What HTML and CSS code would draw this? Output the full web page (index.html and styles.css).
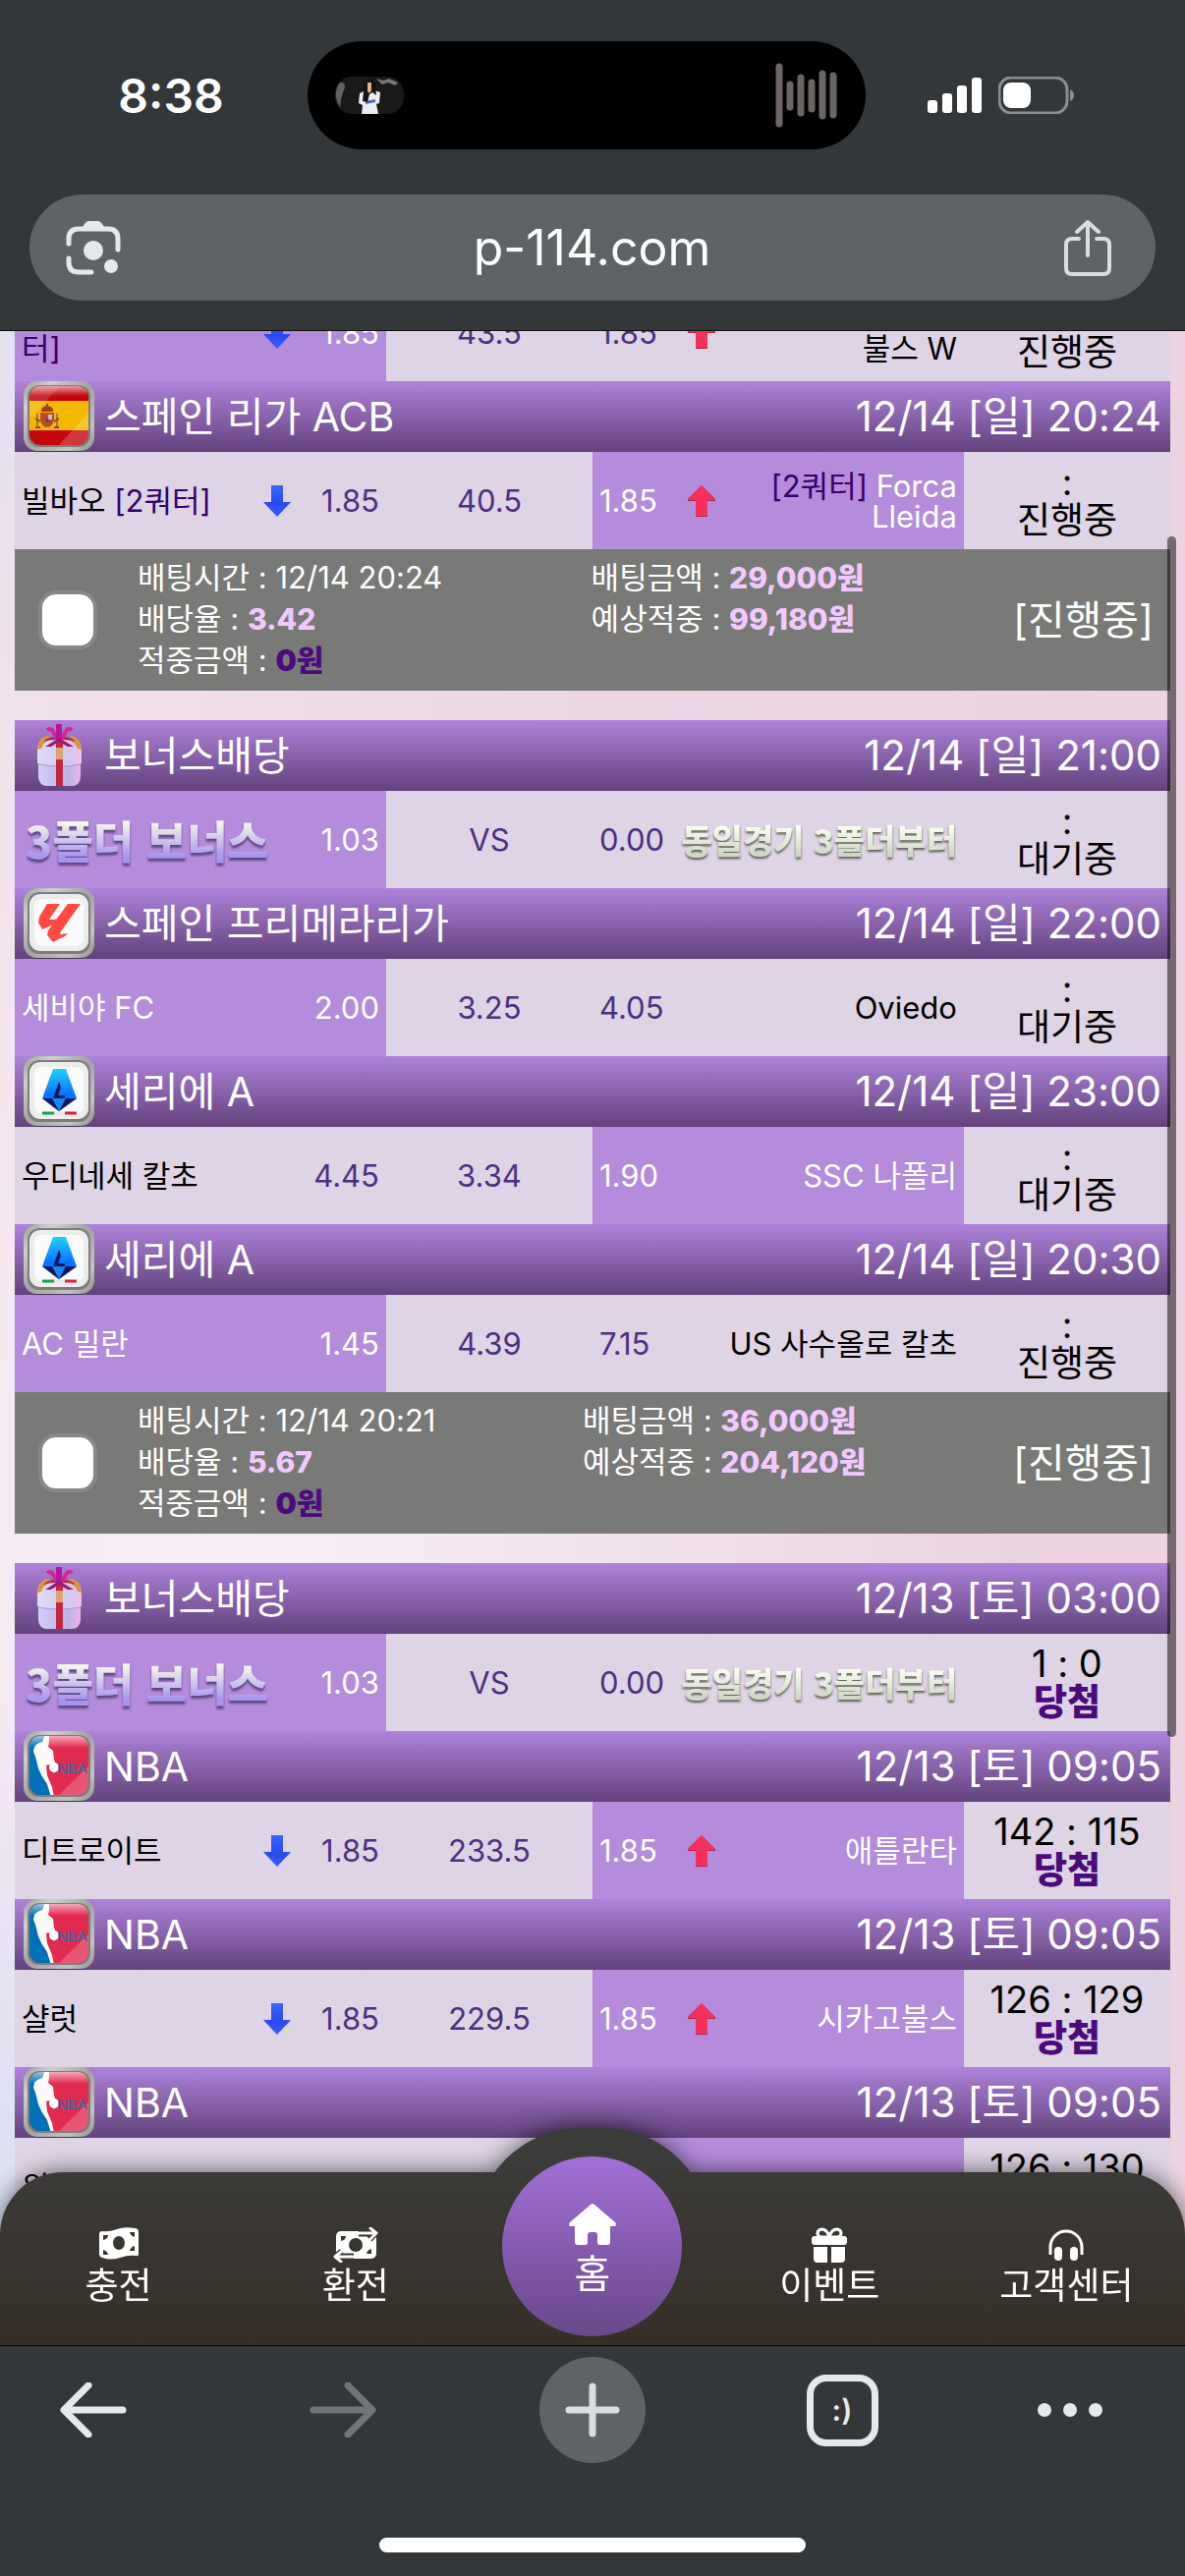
FILE: index.html
```html
<!DOCTYPE html>
<html lang="ko">
<head>
<meta charset="utf-8">
<meta name="viewport" content="width=device-width, initial-scale=1">
<title>p-114.com</title>
<link rel="stylesheet" href="styles.css">
</head>
<body>

<svg class="sprite" aria-hidden="true">
  <defs>
    <linearGradient id="metal" x1="0" y1="0" x2="1" y2="1">
      <stop offset="0" stop-color="#9b9b9a"/><stop offset=".2" stop-color="#cfcfcd"/><stop offset=".5" stop-color="#a2a2a0"/><stop offset=".8" stop-color="#c2c2c0"/><stop offset="1" stop-color="#8d8d8b"/>
    </linearGradient>
    <linearGradient id="gloss" x1="0" y1="0" x2="0" y2="1">
      <stop offset="0" stop-color="#fff" stop-opacity=".6"/><stop offset="1" stop-color="#fff" stop-opacity="0"/>
    </linearGradient>
    <linearGradient id="serie" x1="0" y1="0" x2="0" y2="1">
      <stop offset="0" stop-color="#22d0fb"/><stop offset=".6" stop-color="#0a74ff"/><stop offset="1" stop-color="#0a66f5"/>
    </linearGradient>
    <linearGradient id="box" x1="0" y1="0" x2="1" y2="0">
      <stop offset="0" stop-color="#d5cff5"/><stop offset=".7" stop-color="#b9b2ea"/><stop offset="1" stop-color="#efb4e4"/>
    </linearGradient>
    <linearGradient id="lid" x1="0" y1="0" x2="1" y2="0">
      <stop offset="0" stop-color="#dedcf6"/><stop offset=".7" stop-color="#cfcaf0"/><stop offset="1" stop-color="#f2bfe6"/>
    </linearGradient>
    <linearGradient id="down" x1="0" y1="0" x2="0" y2="1">
      <stop offset="0" stop-color="#3d63ff"/><stop offset=".6" stop-color="#2a4af0"/><stop offset="1" stop-color="#3a5cff"/>
    </linearGradient>
    <clipPath id="face"><rect x="6" y="7" width="60" height="60" rx="11"/></clipPath>
  </defs>
  <symbol id="frame" viewBox="0 0 72 76">
    <rect x="2" y="4" width="68" height="70" rx="14" fill="#000" opacity=".3"/>
    <rect x="0" y="2" width="72" height="71" rx="14" fill="url(#metal)"/>
    <rect x="4" y="6" width="64" height="63" rx="12" fill="#7d7d7d"/>
  </symbol>
  <symbol id="spain" viewBox="0 0 72 76">
    <use href="#frame"/>
    <g clip-path="url(#face)">
      <rect x="6" y="7" width="60" height="60" fill="#c6060f"/>
      <rect x="6" y="22" width="60" height="30" fill="#f3b800"/>
      <path d="M17 34h14v7q-1 7-7 8q-6-1-7-8z" fill="#b8501c"/>
      <path d="M20 36h5v5h-5z" fill="#d83b2c"/><path d="M25 36h4v5h-4z" fill="#d9b7c9"/>
      <circle cx="24" cy="42" r="2" fill="#3a4f96"/>
      <path d="M18 33q-1-5 6-6q7 1 6 6z" fill="#a33a18"/><path d="M24 25v3" stroke="#7d5a10" stroke-width="2"/>
      <path d="M14 35v13M34 35v13" stroke="#8a7f70" stroke-width="2"/>
      <path d="M12 40l5 3M31 43l5-3M12 49h5M31 49h5" stroke="#b33420" stroke-width="2"/>
      <rect x="6" y="7" width="60" height="10" fill="url(#gloss)"/>
      <path d="M6 7h31L6 40z" fill="#fff" opacity=".14"/><path d="M66 34v33H36z" fill="#fff" opacity=".2"/>
    </g>
  </symbol>
  <symbol id="white" viewBox="0 0 72 76">
    <use href="#frame"/>
    <rect x="6" y="8" width="60" height="58" rx="11" fill="#ececeb"/>
    <rect x="11" y="13" width="50" height="48" rx="8" fill="#fbfbfb"/>
  </symbol>
  <symbol id="laliga" viewBox="0 0 72 76">
    <use href="#white"/>
    <path d="M24 18h13L26 34h4l5-1q-3 6-9 8l-7 3-4-7 1-6zM45 18h13L38 46l-1 3 8-1q-3 4-8 5l-7 4-6-7 1-5z" fill="#ff4b44"/>
  </symbol>
  <symbol id="seriea" viewBox="0 0 72 76">
    <use href="#white"/>
    <path d="M30 15h13l11 30-18 13-17-13z" fill="url(#serie)"/>
    <path d="M19 45h35L36 58z" fill="#15155c"/><path d="M29 45h14l-7 13z" fill="#1288f0"/>
    <path d="M36 28l-6 17h12v-3h-7l3-8z" fill="#0c1a66"/>
    <path d="M19 60h12" stroke="#1ba04d" stroke-width="3"/><path d="M31 60h11" stroke="#e6e6e6" stroke-width="3"/><path d="M42 60h12" stroke="#e01d3a" stroke-width="3"/>
  </symbol>
  <symbol id="nba" viewBox="0 0 72 76">
    <use href="#frame"/>
    <g clip-path="url(#face)">
      <rect x="5" y="7" width="62" height="60" fill="#e32b52"/>
      <path d="M5 7h16l-6 18-1 10 9 20 5 12H5z" fill="#0070b8"/>
      <path d="M21 7h5v6l-1 5 5 4 1 9 3 8-3 6-5-9-3 1 1 10 5 12 2 10h-3l-4-13q-6-8-9-16l-3-12-2-5q0-8 9-10l1-2z" fill="#fafafa"/>
      <circle cx="31" cy="39" r="5" fill="#fff"/>
      <path d="M66 38v29H36z" fill="#fff" opacity=".2"/>
      <rect x="6" y="7" width="60" height="12" fill="url(#gloss)"/>
    </g>
  </symbol>
  <symbol id="gift3d" viewBox="0 0 72 76">
    <path d="M15 25h43v35q-1 9-9 9H24q-8 0-9-9z" fill="url(#box)"/>
    <path d="M14 34q0-13 10-15h25q10 2 10 15v12q-21 5-45 0z" fill="url(#lid)"/>
    <path d="M15 47q21 4 43 0" stroke="#a79bd6" stroke-width="1" fill="none"/>
    <path d="M14 32q1-12 9-14l9 2q-12 3-14 11zM59 32q-1-12-9-14l-9 2q12 3 14 11z" fill="#d8973f"/>
    <path d="M20 24q4-5 12-5l9 0q8 0 12 5-6-2-12-2h-9q-6 0-12 2z" fill="#b02a55"/>
    <path d="M33 22h7v47h-7z" fill="#c4283e"/><path d="M33 30h7v12h-7z" fill="#dfa26a"/>
    <path d="M24 12q2-2 5 0l6 10M49 12q-2-2-5 0l-6 10" stroke="#d4268f" stroke-width="4" fill="none"/>
    <path d="M33 6h6v18h-6z" fill="#b019a0"/><path d="M22 29l14-9 15 9-6 0-9-5-8 5z" fill="#a5156f"/>
  </symbol>
  <symbol id="arrow-down" viewBox="0 0 28 32"><path d="M8 0h12v17h8L14 32 0 17h8z" fill="url(#down)"/></symbol>
  <symbol id="arrow-up" viewBox="0 0 28 32"><path d="M14 0l14 14v2h-8v16H8V16H0v-2z" fill="#b92245"/><path d="M14 0l14 15h-8v16H8V15H0z" fill="#f5315b"/></symbol>
</svg>

<header class="browser-top">
  <div class="status">
    <time class="clock">8:38</time>
    <div class="island">
      <svg class="thumb" viewBox="0 0 70 38" aria-hidden="true">
        <rect width="70" height="38" rx="17" fill="#191919"/>
        <path d="M4 7q6-3 6 4Q6 20 5 31Q-3 18 4 7z" fill="#626262"/>
        <path d="M42 2l7 2 6-2 9 4-3 3-7-3-6 2z" fill="#777"/>
        <path d="M25 17l6-3h9l6 2-1 11-3 1 2 10H27l1-9-4-2z" fill="#ededf2"/>
        <path d="M31 25l10-2v3l-10 2z" fill="#506da8"/>
        <path d="M30 6q2-5 6-4q5 1 5 8l1 9-4-3-3 2-2 8-5-1z" fill="#161213"/>
        <path d="M33 6h4v8l-2 3-2-2z" fill="#e3b090"/>
      </svg>
      <svg class="wave" viewBox="0 0 64 66" aria-hidden="true">
        <g stroke="#6b6563" stroke-width="7" stroke-linecap="round"><path d="M4 4v58M15 22v23M26 15v36M37 20v27M48 11v43M59 13v40"/></g>
      </svg>
    </div>
    <div class="signals">
      <svg class="cell" viewBox="0 0 56 36" aria-hidden="true"><g fill="#fff"><rect y="23" width="10" height="13" rx="3"/><rect x="15" y="16" width="10" height="20" rx="3"/><rect x="30" y="8" width="10" height="28" rx="3"/><rect x="45" y="0" width="10" height="36" rx="3"/></g></svg>
      <svg class="battery" viewBox="0 0 78 38" aria-hidden="true"><rect x="1" y="1" width="69" height="36" rx="12" fill="none" stroke="#8b8d8f" stroke-width="3"/><rect x="5" y="6" width="28" height="26" rx="8" fill="#fff"/><path d="M73 13q4 2 4 6t-4 6z" fill="#8b8d8f"/></svg>
    </div>
  </div>
  <div class="address">
    <button class="plain" type="button" aria-label="카메라 검색">
      <svg class="ic-lens" viewBox="0 0 56 56"><g fill="none" stroke="#e6e9ec" stroke-width="5" stroke-linecap="round"><path d="M3 24v-5Q3 9 13 9h30q10 0 10 10v11M3 39v4q0 10 10 10h13"/></g><path d="M16 9q4-8 7-8h10q3 0 7 8z" fill="#e6e9ec"/><circle cx="28" cy="31" r="10" fill="#e6e9ec"/><circle cx="46" cy="47" r="7" fill="#e6e9ec"/></svg>
    </button>
    <span class="url">p-114.com</span>
    <button class="plain" type="button" aria-label="공유">
      <svg class="ic-share" viewBox="0 0 50 58"><g fill="none" stroke="#dadde2" stroke-width="4" stroke-linecap="round" stroke-linejoin="round"><path d="M16 20h-7q-6 0-6 6v24q0 6 6 6h32q6 0 6-6V26q0-6-6-6h-7"/><path d="M25 37V4M14 13L25 3l11 10"/></g></svg>
    </button>
  </div>
</header>

<main class="screen">
  <div class="scroll">

    <table class="bet">
      <colgroup><col class="c-team"><col class="c-line"><col class="c-team"><col class="c-state"></colgroup>
      <tbody>
      <tr class="match">
        <td class="on"><div class="side"><span class="team"><br><em>터]</em></span><svg class="arw"><use href="#arrow-down"/></svg><span class="odd">1.85</span></div></td>
        <td class="line">43.5</td>
        <td><div class="side"><span class="odd away">1.85</span><svg class="arw"><use href="#arrow-up"/></svg><span class="team right"><br>불스 W</span></div></td>
        <td class="state"><br>진행중</td>
      </tr>
      <tr class="league"><th colspan="4"><div class="bar"><svg class="logo"><use href="#spain"/></svg><span>스페인 리가 ACB</span><time>12/14 [일] 20:24</time></div></th></tr>
      <tr class="match">
        <td><div class="side"><span class="team">빌바오 <em>[2쿼터]</em></span><svg class="arw"><use href="#arrow-down"/></svg><span class="odd">1.85</span></div></td>
        <td class="line">40.5</td>
        <td class="on"><div class="side"><span class="odd away">1.85</span><svg class="arw"><use href="#arrow-up"/></svg><span class="team right"><em>[2쿼터]</em> Forca<br>Lleida</span></div></td>
        <td class="state">:<br>진행중</td>
      </tr>
      <tr class="total"><td colspan="4"><div class="sum">
        <input class="pick" type="checkbox" aria-label="12/14 20:24 배팅 선택">
        <p>배팅시간 : 12/14 20:24<br>배당율 : <b>3.42</b><br>적중금액 : <b class="won">0원</b></p>
        <p>배팅금액 : <b>29,000원</b><br>예상적중 : <b>99,180원</b></p>
        <span class="result">[진행중]</span>
      </div></td></tr>
      </tbody>
    </table>

    <table class="bet">
      <colgroup><col class="c-team"><col class="c-line"><col class="c-team"><col class="c-state"></colgroup>
      <tbody>
      <tr class="league"><th colspan="4"><div class="bar"><svg class="logo"><use href="#gift3d"/></svg><span>보너스배당</span><time>12/14 [일] 21:00</time></div></th></tr>
      <tr class="match">
        <td class="on"><div class="side"><span class="bonus">3폴더 보너스</span><span class="odd">1.03</span></div></td>
        <td class="line">VS</td>
        <td><div class="side spread"><span class="odd away">0.00</span><span class="bonus pale">동일경기 3폴더부터</span></div></td>
        <td class="state">:<br>대기중</td>
      </tr>
      <tr class="league"><th colspan="4"><div class="bar"><svg class="logo"><use href="#laliga"/></svg><span>스페인 프리메라리가</span><time>12/14 [일] 22:00</time></div></th></tr>
      <tr class="match">
        <td class="on"><div class="side"><span class="team">세비야 FC</span><span class="odd">2.00</span></div></td>
        <td class="line">3.25</td>
        <td><div class="side"><span class="odd away">4.05</span><span class="team right">Oviedo</span></div></td>
        <td class="state">:<br>대기중</td>
      </tr>
      <tr class="league"><th colspan="4"><div class="bar"><svg class="logo"><use href="#seriea"/></svg><span>세리에 A</span><time>12/14 [일] 23:00</time></div></th></tr>
      <tr class="match">
        <td><div class="side"><span class="team">우디네세 칼초</span><span class="odd">4.45</span></div></td>
        <td class="line">3.34</td>
        <td class="on"><div class="side"><span class="odd away">1.90</span><span class="team right">SSC 나폴리</span></div></td>
        <td class="state">:<br>대기중</td>
      </tr>
      <tr class="league"><th colspan="4"><div class="bar"><svg class="logo"><use href="#seriea"/></svg><span>세리에 A</span><time>12/14 [일] 20:30</time></div></th></tr>
      <tr class="match">
        <td class="on"><div class="side"><span class="team">AC 밀란</span><span class="odd">1.45</span></div></td>
        <td class="line">4.39</td>
        <td><div class="side"><span class="odd away">7.15</span><span class="team right">US 사수올로 칼초</span></div></td>
        <td class="state">:<br>진행중</td>
      </tr>
      <tr class="total"><td colspan="4"><div class="sum">
        <input class="pick" type="checkbox" aria-label="12/14 20:21 배팅 선택">
        <p>배팅시간 : 12/14 20:21<br>배당율 : <b>5.67</b><br>적중금액 : <b class="won">0원</b></p>
        <p>배팅금액 : <b>36,000원</b><br>예상적중 : <b>204,120원</b></p>
        <span class="result">[진행중]</span>
      </div></td></tr>
      </tbody>
    </table>

    <table class="bet">
      <colgroup><col class="c-team"><col class="c-line"><col class="c-team"><col class="c-state"></colgroup>
      <tbody>
      <tr class="league"><th colspan="4"><div class="bar"><svg class="logo"><use href="#gift3d"/></svg><span>보너스배당</span><time>12/13 [토] 03:00</time></div></th></tr>
      <tr class="match">
        <td class="on"><div class="side"><span class="bonus">3폴더 보너스</span><span class="odd">1.03</span></div></td>
        <td class="line">VS</td>
        <td><div class="side spread"><span class="odd away">0.00</span><span class="bonus pale">동일경기 3폴더부터</span></div></td>
        <td class="state"><span class="score">1 : 0</span><br><b>당첨</b></td>
      </tr>
      <tr class="league"><th colspan="4"><div class="bar"><span class="logo-nba"><svg class="logo"><use href="#nba"/></svg><i>NBA</i></span><span>NBA</span><time>12/13 [토] 09:05</time></div></th></tr>
      <tr class="match">
        <td><div class="side"><span class="team">디트로이트</span><svg class="arw"><use href="#arrow-down"/></svg><span class="odd">1.85</span></div></td>
        <td class="line">233.5</td>
        <td class="on"><div class="side"><span class="odd away">1.85</span><svg class="arw"><use href="#arrow-up"/></svg><span class="team right">애틀란타</span></div></td>
        <td class="state"><span class="score">142 : 115</span><br><b>당첨</b></td>
      </tr>
      <tr class="league"><th colspan="4"><div class="bar"><span class="logo-nba"><svg class="logo"><use href="#nba"/></svg><i>NBA</i></span><span>NBA</span><time>12/13 [토] 09:05</time></div></th></tr>
      <tr class="match">
        <td><div class="side"><span class="team">샬럿</span><svg class="arw"><use href="#arrow-down"/></svg><span class="odd">1.85</span></div></td>
        <td class="line">229.5</td>
        <td class="on"><div class="side"><span class="odd away">1.85</span><svg class="arw"><use href="#arrow-up"/></svg><span class="team right">시카고불스</span></div></td>
        <td class="state"><span class="score">126 : 129</span><br><b>당첨</b></td>
      </tr>
      <tr class="league"><th colspan="4"><div class="bar"><span class="logo-nba"><svg class="logo"><use href="#nba"/></svg><i>NBA</i></span><span>NBA</span><time>12/13 [토] 09:05</time></div></th></tr>
      <tr class="match">
        <td><div class="side"><span class="team">워싱턴</span></div></td>
        <td class="line"></td>
        <td class="on"></td>
        <td class="state"><span class="score">126 : 130</span><br><b>당첨</b></td>
      </tr>
      </tbody>
    </table>
  </div>

  <div class="thumb-bar"></div>

  <nav class="dock">
    <ul>
      <li><a href="#charge"><svg class="ic" viewBox="0 0 42 36"><path d="M1 7q0-3 3-3 7 1 15-2T37 1q4 0 4 4v22q0 3-3 2-7-1-16 2T4 31q-3-1-3-4z" fill="#fff"/><ellipse cx="21" cy="16" rx="6" ry="7" fill="#38342f"/><path d="M5 8h5q0 4-5 5zM37 5v5q-4-1-5-5zM5 23q4 1 5 5H5zM37 19v5h-5q1-4 5-5z" fill="#38342f"/></svg>충전</a></li>
      <li><a href="#exchange"><svg class="ic" viewBox="0 0 46 36"><rect x="3" y="4" width="41" height="28" rx="5" fill="#fff"/><circle cx="23" cy="18" r="7" fill="#38342f"/><path d="M8 9h5q0 4-5 5zM39 22v5h-5q1-4 5-5z" fill="#38342f"/><g fill="none" stroke="#38342f" stroke-width="7" stroke-linejoin="round"><path d="M26 6h15M37 1l6 5-6 6M21 30H4M9 25l-6 5 6 5"/></g><g fill="none" stroke="#fff" stroke-width="3" stroke-linecap="round" stroke-linejoin="round"><path d="M27 6h16M38 1l6 5-6 6M20 30H3M8 25l-6 5 6 5"/></g></svg>환전</a></li>
      <li class="home"><a href="#home"><svg class="ic-home" viewBox="0 0 48 42"><path d="M22 1q2-2 4 0l21 18q2 2 0 4h-5v16q0 3-3 3h-8q-2 0-2-2V32q0-3-3-3h-4q-3 0-3 3v8q0 2-2 2H9q-3 0-3-3V23H1q-2-2 0-4z" fill="#fff"/></svg>홈</a></li>
      <li><a href="#event"><svg class="ic" viewBox="0 0 36 36"><rect y="9" width="36" height="9" rx="3" fill="#fff"/><path d="M2 20h14v16H6q-4 0-4-4zM20 20h14v12q0 4-4 4H20z" fill="#fff"/><path d="M18 10Q16 2 10 2q-4 1-4 4t3 4zM18 10q2-8 8-8q4 1 4 4t-3 4z" fill="none" stroke="#fff" stroke-width="3"/></svg>이벤트</a></li>
      <li><a href="#support"><svg class="ic" viewBox="0 0 36 36"><path d="M2 28v-8a16 16 0 0 1 32 0v8" fill="none" stroke="#fff" stroke-width="3"/><rect x="6" y="20" width="8" height="14" rx="4" fill="#fff"/><rect x="22" y="20" width="8" height="14" rx="4" fill="#fff"/></svg>고객센터</a></li>
    </ul>
  </nav>
</main>

<footer class="browser-bottom">
  <div class="tools">
    <button class="plain" type="button" aria-label="뒤로"><svg class="ic-arrow" viewBox="0 0 68 56"><path d="M64 28H5M29 3L4 28l25 25" fill="none" stroke="#e6e9ec" stroke-width="7" stroke-linecap="round" stroke-linejoin="round"/></svg></button>
    <button class="plain" type="button" aria-label="앞으로"><svg class="ic-arrow" viewBox="0 0 68 56"><path d="M4 28h59M39 3l25 25-25 25" fill="none" stroke="#737475" stroke-width="7" stroke-linecap="round" stroke-linejoin="round"/></svg></button>
    <button class="plain" type="button" aria-label="새 탭"><span class="disc"><svg class="ic-plus" viewBox="0 0 56 56"><path d="M28 4v48M4 28h48" stroke="#dadde2" stroke-width="7" stroke-linecap="round"/></svg></span></button>
    <button class="plain" type="button" aria-label="탭 목록"><span class="tabs">:)</span></button>
    <button class="plain more" type="button" aria-label="더보기"><svg class="ic-dots" viewBox="0 0 68 16"><g fill="#e6e9ec"><circle cx="8" cy="8" r="7"/><circle cx="34" cy="8" r="7"/><circle cx="60" cy="8" r="7"/></g></svg></button>
  </div>
  <div class="home-indicator"></div>
</footer>

</body>
</html>
```
FILE: styles.css
```css
* { box-sizing: border-box; }

html, body { height: 100%; margin: 0; }

body {
  display: flex;
  flex-direction: column;
  overflow: hidden;
  background: #333739;
  color: #000;
  font-family: Inter, "Noto Sans CJK KR", sans-serif;
}

.sprite { position: absolute; width: 0; height: 0; }

.plain {
  display: flex;
  align-items: center;
  justify-content: center;
  padding: 0;
  border: 0;
  background: none;
}

/* browser top */
.browser-top {
  flex: none;
  padding-bottom: 30px;
  border-bottom: 1px solid #111;
}

.status {
  display: grid;
  grid-template-columns: 313fr 568fr 325fr;
  align-items: center;
  padding: 42px 0 46px;
}

.clock {
  padding-left: 35px;
  color: #fff;
  font-size: 48px;
  font-weight: 600;
  text-align: center;
}

.island {
  display: flex;
  align-items: center;
  justify-content: space-between;
  height: 110px;
  padding: 0 28px;
  border-radius: 55px;
  background: #000;
}

.thumb { width: 70px; height: 38px; }
.wave { width: 64px; height: 66px; }

.signals {
  display: flex;
  align-items: center;
  justify-content: center;
  gap: 16px;
  padding-right: 50px;
}

.cell { width: 56px; height: 36px; }
.battery { width: 78px; height: 38px; }

.address {
  display: flex;
  align-items: center;
  justify-content: space-between;
  height: 108px;
  margin: 0 30px;
  padding: 0 44px 0 37px;
  border-radius: 54px;
  background: #5e6366;
}

.url { color: #fff; font-size: 50px; line-height: 60px; }
.ic-lens { width: 56px; height: 56px; }
.ic-share { width: 50px; height: 58px; }

/* page */
.screen {
  position: relative;
  flex: 1 1 0;
  min-height: 0;
  overflow: hidden;
  background:
    radial-gradient(circle at 0 92%, #dce1f4 0, rgba(220, 225, 244, 0) 22%),
    radial-gradient(circle at 0 0, #e3e0ef 0, rgba(227, 224, 239, 0) 16%),
    radial-gradient(circle at 20% 60%, #f7eef5 0, rgba(247, 238, 245, 0) 50%),
    linear-gradient(90deg, #f2e2eb, #ecd6e4 50%, #edd2e1);
}

.scroll { margin-top: -48px; padding: 0 15px; }

.bet {
  width: 100%;
  margin-bottom: 30px;
  border-spacing: 0;
  table-layout: fixed;
}

.bet td, .bet th { padding: 0; font-weight: 400; }
.c-team { width: 32.14%; }
.c-line, .c-state { width: 17.86%; }

.league th { background: linear-gradient(#ae82da, #63427c); }

.bar {
  display: flex;
  align-items: center;
  height: 72px;
  padding: 0 9px;
  color: #fff;
  font-size: 41px;
  line-height: 48px;
}

.bar time { margin-left: auto; font-size: 42px; }

.logo {
  display: block;
  flex: none;
  width: 72px;
  height: 76px;
  margin-right: 10px;
}

.logo-nba { position: relative; }

.logo-nba i {
  position: absolute;
  top: 30px;
  left: 34px;
  color: #1d6fb5;
  font: 15px/20px "Liberation Sans", sans-serif;
}

.match td {
  height: 99px;
  background: #dfd4e5;
  font-size: 31px;
  line-height: 31px;
}

.match td.on { background: #b48cdb; color: #fff; }

.side { display: flex; align-items: center; padding: 0 7px; }
.spread { justify-content: space-between; }
.team { flex: 1; color: inherit; white-space: nowrap; }
.team em { color: #34006b; font-style: normal; }
.right { text-align: right; }

.odd { flex: none; width: 90px; color: #4d2f80; text-align: right; }
.odd.away { text-align: left; }
.spread .odd { width: auto; }
.on .odd { color: #fff; }
.arw { flex: none; width: 28px; height: 32px; }

.match td.line { color: #4d2f80; text-align: center; }

.match td.state {
  font-size: 37px;
  line-height: 39px;
  text-align: center;
}

.score { font-size: 38px; }
.state b { color: #4c0a7c; font-weight: 900; }

.bonus {
  flex: 1;
  padding-left: 4px;
  background: linear-gradient(#f4f6ea 15%, #a894ee 85%);
  -webkit-background-clip: text;
  background-clip: text;
  color: transparent;
  filter: drop-shadow(0 3px 1px rgba(60, 40, 90, .7));
  font-family: "Noto Sans CJK KR", sans-serif;
  font-size: 45px;
  font-weight: 900;
  line-height: 48px;
  white-space: nowrap;
}

.bonus.pale {
  flex: none;
  padding: 0;
  background-image: linear-gradient(#fbfff2 20%, #cfd8c6 80%);
  filter: drop-shadow(0 2px 1px rgba(60, 60, 50, .8));
  font-size: 34px;
}

.total td { background: #797977; }

.sum {
  display: flex;
  align-items: center;
  height: 144px;
  padding: 0 17px 0 24px;
  color: #fff;
  font-size: 31px;
  line-height: 42px;
}

.pick {
  flex: none;
  width: 60px;
  height: 60px;
  margin: 0 41px 0 0;
  appearance: none;
  border: 4px solid #87878c;
  border-radius: 18px;
  background: #fff;
}

.sum p { flex: 1 1 auto; align-self: flex-start; margin: 8px 0 0; }
.sum b { color: #f2c9ff; font-size: 30px; font-weight: 800; }
.sum b.won { color: #4c0a7c; font-weight: 900; }
.result { font-size: 41px; }

/* scroll position marker laid over the list */
.thumb-bar {
  position: absolute;
  top: 10.2%;
  right: 9px;
  width: 9px;
  height: 59.6%;
  border-radius: 5px;
  background: rgba(0, 0, 0, .5);
}

/* dock laid over the list */
.dock {
  position: absolute;
  right: 0;
  bottom: 0;
  left: 0;
  filter: drop-shadow(0 0 12px rgba(0, 0, 0, .6));
}

.dock::before {
  content: "";
  position: absolute;
  top: -45px;
  left: calc(50% - 121px);
  width: 242px;
  height: 220px;
  border-radius: 121px;
  background: #3b3b39;
}

.dock ul {
  position: relative;
  display: grid;
  grid-template-columns: repeat(5, 1fr);
  height: 176px;
  margin: 0;
  padding: 0;
  border-radius: 64px 64px 0 0;
  background: linear-gradient(#3b3a38, #37322c 75%, #382d29);
  list-style: none;
}

.dock a {
  display: flex;
  flex-direction: column;
  align-items: center;
  gap: 2px;
  padding-top: 56px;
  color: #fff;
  font-size: 37px;
  line-height: 44px;
  text-decoration: none;
}

.ic { height: 36px; }

.home { display: flex; justify-content: center; }

.dock .home a {
  gap: 8px;
  width: 183px;
  height: 183px;
  margin-top: -16px;
  padding-top: 48px;
  border-radius: 50%;
  background: linear-gradient(#a36fd6, #69488a);
  font-size: 40px;
}

.ic-home { width: 48px; height: 42px; }

/* browser bottom */
.browser-bottom {
  flex: none;
  padding: 11px 0 24px;
  border-top: 1px solid #000;
}

.tools {
  display: flex;
  justify-content: space-between;
  padding: 0 32px;
}

.tools .plain { width: 126px; height: 108px; }
.tools .more { padding-right: 44px; }

.ic-arrow { width: 68px; height: 56px; }
.ic-plus { width: 56px; height: 56px; }
.ic-dots { width: 68px; height: 16px; }

.disc {
  display: flex;
  align-items: center;
  justify-content: center;
  width: 108px;
  height: 108px;
  border-radius: 50%;
  background: #5e6366;
}

.tabs {
  width: 73px;
  height: 73px;
  border: 7px solid #e6e9ec;
  border-radius: 20px;
  color: #e6e9ec;
  font: 600 30px/58px Inter, sans-serif;
}

.home-indicator {
  width: 36%;
  height: 15px;
  margin: 76px auto 0;
  border-radius: 8px;
  background: #fff;
}
```
